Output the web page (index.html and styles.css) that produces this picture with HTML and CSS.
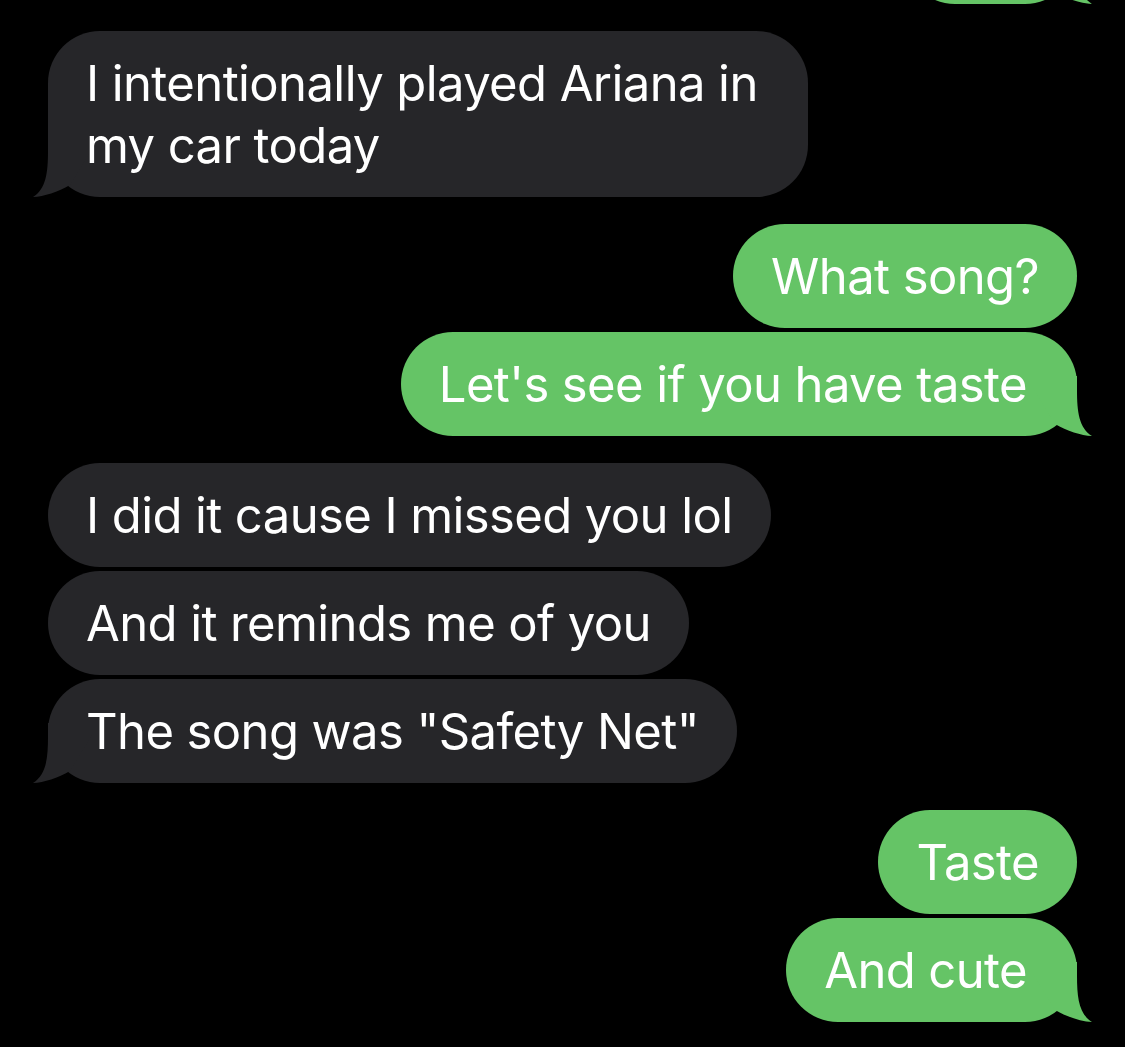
FILE: index.html
```html
<!DOCTYPE html>
<html lang="en">
<head>
    <meta charset="UTF-8">
    <meta name="viewport" content="width=device-width, initial-scale=1.0">
    <title>Messages</title>
    <link rel="stylesheet" href="styles.css">
</head>
<body>
    <div class="thread">
        <!-- previous message, scrolled mostly out of view -->
        <div class="group mine first">
            <div class="bubble tailed clipped">
                <svg class="tail" viewBox="0 0 60 60" width="60" height="60"><path d="M16,0 L16,14 C16,36 14,52 1,60 C12,59.5 26,55 38,48 L60,12 L60,0 Z"/></svg>
            </div>
        </div>

        <div class="group theirs">
            <div class="bubble tailed">I intentionally played Ariana in my car today
                <svg class="tail" viewBox="0 0 60 60" width="60" height="60"><path d="M16,0 L16,14 C16,36 14,52 1,60 C12,59.5 26,55 38,48 L60,12 L60,0 Z"/></svg>
            </div>
        </div>

        <div class="group mine">
            <div class="bubble">What song?</div>
            <div class="bubble tailed">Let's see if you have taste
                <svg class="tail" viewBox="0 0 60 60" width="60" height="60"><path d="M16,0 L16,14 C16,36 14,52 1,60 C12,59.5 26,55 38,48 L60,12 L60,0 Z"/></svg>
            </div>
        </div>

        <div class="group theirs">
            <div class="bubble">I did it cause I missed you lol</div>
            <div class="bubble">And it reminds me of you</div>
            <div class="bubble tailed">The song was "Safety Net"
                <svg class="tail" viewBox="0 0 60 60" width="60" height="60"><path d="M16,0 L16,14 C16,36 14,52 1,60 C12,59.5 26,55 38,48 L60,12 L60,0 Z"/></svg>
            </div>
        </div>

        <div class="group mine">
            <div class="bubble">Taste</div>
            <div class="bubble tailed">And cute
                <svg class="tail" viewBox="0 0 60 60" width="60" height="60"><path d="M16,0 L16,14 C16,36 14,52 1,60 C12,59.5 26,55 38,48 L60,12 L60,0 Z"/></svg>
            </div>
        </div>
    </div>
</body>
</html>
```

FILE: styles.css
```css
html {
    background-color: #000;
}
html, body {
    margin: 0;
    padding: 0;
    height: 100%;
    overflow: hidden;
}
body {
    font-family: Inter, "Liberation Sans", Arial, sans-serif;
    color: #fff;
}
.thread {
    display: flex;
    flex-direction: column;
    gap: 27px;
    padding: 0 48px;
}
.group {
    display: flex;
    flex-direction: column;
    gap: 4px;
}
.group.first {
    margin-top: -100px;
}
.theirs {
    align-items: flex-start;
}
.mine {
    align-items: flex-end;
}
.bubble {
    position: relative;
    z-index: 0;
    max-width: 760px;
    box-sizing: border-box;
    padding: 22px 38px 20px;
    font-size: 49px;
    line-height: 62px;
    letter-spacing: -0.6px;
    border-radius: 52px;
}
.mine .bubble.tailed {
    padding-right: 50px;
}
.bubble.clipped {
    width: 174px;
    height: 104px;
}
.theirs .bubble {
    background-color: #262629;
}
.mine .bubble {
    background-color: #65c466;
}
.tail {
    position: absolute;
    bottom: 0;
    display: block;
    z-index: -1;
}
.theirs .tail {
    left: -16px;
    fill: #262629;
}
.mine .tail {
    right: -16px;
    fill: #65c466;
    transform: scaleX(-1);
}
```
